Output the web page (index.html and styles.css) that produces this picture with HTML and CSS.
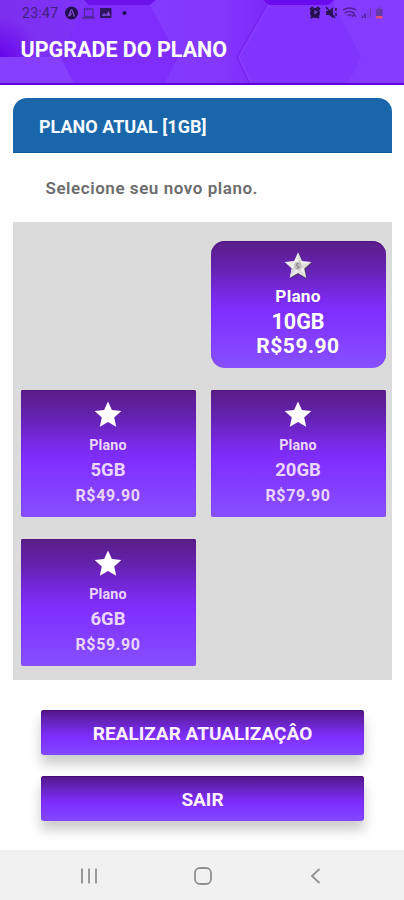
FILE: index.html
```html
<!DOCTYPE html>
<html lang="pt-BR">
<head>
<meta charset="utf-8">
<title>Upgrade do Plano</title>
<link rel="stylesheet" href="styles.css">
</head>
<body>
<header class="header">
  <svg class="header-art" viewBox="0 0 404 85" preserveAspectRatio="none" aria-hidden="true">
    <defs>
      <linearGradient id="left" x1="0" y1="0" x2="1" y2="0"><stop offset="0" stop-color="#7c2fee"/><stop offset="1" stop-color="#7f33f7"/></linearGradient>
      <radialGradient id="low" gradientUnits="userSpaceOnUse" cx="0" cy="57" r="40"><stop offset="0" stop-color="#6200ea" stop-opacity=".9"/><stop offset="1" stop-color="#6600f0" stop-opacity="0"/></radialGradient>
      <linearGradient id="soft" x1="0" y1="0" x2="1" y2="0"><stop offset="0" stop-color="#853bff"/><stop offset=".6" stop-color="#8436fd"/><stop offset="1" stop-color="#7c2af6"/></linearGradient>
    </defs>
    <rect width="404" height="85" fill="#7e2dff"/>
    <path d="M0 0H88L74 28L60 57H0Z" fill="url(#left)"/>
    <path d="M0 0H88L74 28L60 57H0Z" fill="url(#low)"/>
    <path d="M0 57H61L75 85H0Z" fill="#873fff"/>
    <path d="M84 0H160L150 5H89Z" fill="#6c12ea"/>
    <path d="M89 5H150L178 57L164 85H75L60 57Z" fill="#7e2dfd"/>
    <path d="M156 0H269L239 57L252 85H164L178 57L150 5Z" fill="url(#soft)"/>
    <path d="M263 0H334L328 5H269Z" fill="#6a0aee"/>
    <path d="M269 5H334L361 57L347 85H252L239 57Z" fill="#8034fd"/>
    <path d="M269 5L239 57L252 85" fill="none" stroke="#9142ff"/>
    <path d="M267 5L237 57L250 85" fill="none" stroke="#6910e8" stroke-width="1.5" opacity=".3"/>
    <path d="M334 5L361 57L347 85H404V0H334Z" fill="#853cff"/>
    <rect y="83" width="404" height="2" fill="#6400df"/>
  </svg>
  <div class="status">
    <div class="status-left">
      <span class="clock">23:47</span>
      <svg width="65" height="16" viewBox="0 0 65 16">
        <circle cx="6.500" cy="8" r="6.500" fill="#24104e"/>
        <path d="M3.500 11.500L5.800 5.500Q6.500 4.300 7.200 5.500L9.500 11.500M6.500 8L5 11" fill="none" stroke="#8048d0" stroke-width="1.300"/>
        <path d="M19.500 4h8.500v7.500h-8.500zM17 13h13" fill="none" stroke="#53269d" stroke-width="1.300"/>
        <rect x="35" y="3" width="11.500" height="10" rx="1" fill="#2e145e"/>
        <path d="M36.500 10.800L39 8l2 2 2.500-4 2 4.800z" fill="#8650dd"/>
        <circle cx="59.500" cy="8" r="2" fill="#24104e"/>
      </svg>
    </div>
    <svg class="status-right" width="76" height="16" viewBox="0 0 76 16">
      <path d="M1 4.500L4 2M11 4.500L8 2" stroke="#25104d" stroke-width="2"/>
      <circle cx="6" cy="8" r="5" fill="#25104d"/>
      <path d="M2 13l2-2M10 13l-2-2" stroke="#25104d" stroke-width="2"/>
      <path d="M6 5v3.500l2.500-2" fill="none" stroke="#7843ce" stroke-width="1.200"/>
      <path d="M17 6h3l4-4v11l-4-3h-3z" fill="#2b1257"/>
      <path d="M17 2l9 11M27 3v3m0 2v3" stroke="#2b1257" stroke-width="1.500"/>
      <path d="M34 5q6.500-4 13 0M36 8q4.500-3 9 0M38.500 10.500q2-1.500 4 0" fill="none" stroke="#502095" stroke-width="1.600"/>
      <path d="M43 12l2-3 2 3" fill="none" stroke="#502095" stroke-width="1.400"/>
      <path d="M53.500 13V10.500M56 13V8.500" stroke="#4c1f90" stroke-width="1.500"/>
      <path d="M59 13V5M61.500 13V3" stroke="#7038c8" stroke-width="1"/>
      <path d="M67 4h2V2.500h2.500V4h2v7H67z" fill="#663aa9"/>
      <rect x="67" y="11" width="6.500" height="2.500" fill="#e54d7e"/>
    </svg>
  </div>
  <h1 class="title">UPGRADE DO PLANO</h1>
</header>

<main class="content">
  <h2 class="current-plan">PLANO ATUAL [1GB]</h2>
  <p class="hint">Selecione seu novo plano.</p>

  <section class="plans">
    <article class="plan plan-selected">
      <svg class="star" viewBox="0 0 28 28">
        <path d="M14.800 1L18.800 9.500L28 11L21.500 17.800L23 27L14.600 22.500L6 26.500L8 17.500Z" fill="#4b3860"/>
        <path d="M14 .5L17.900 9L27.300 10L20.200 16.500L22.200 25.800L14 21L5.800 25.800L7.800 16.500L.7 10L10.100 9Z" fill="#eeedec"/>
        <path d="M14 .5L17.900 9L14 14ZM27.300 10L20.200 16.500L14 14ZM22.200 25.800L14 21V14ZM5.800 25.800L7.800 16.500L14 14Z" fill="#dedcdb"/>
        <circle cx="14" cy="14" r="4" fill="#c4c2c2"/>
        <path d="M15.500 12Q12.500 11 12.500 12.700T14.500 14.500T12.500 16.500" fill="none" stroke="#969294" stroke-width="1.300"/>
      </svg>
      <span class="label">Plano</span>
      <span class="size">10GB</span>
      <span class="price">R$59.90</span>
    </article>
    <article class="plan plan-left">
      <svg class="star" viewBox="0 0 28 28"><path d="M14 .5L17.900 9L27.300 10L20.200 16.500L22.200 25.800L14 21L5.800 25.800L7.800 16.500L.7 10L10.100 9Z" fill="#fff"/></svg>
      <span class="label">Plano</span>
      <span class="size">5GB</span>
      <span class="price">R$49.90</span>
    </article>
    <article class="plan">
      <svg class="star" viewBox="0 0 28 28"><path d="M14 .5L17.900 9L27.300 10L20.200 16.500L22.200 25.800L14 21L5.800 25.800L7.800 16.500L.7 10L10.100 9Z" fill="#fff"/></svg>
      <span class="label">Plano</span>
      <span class="size">20GB</span>
      <span class="price">R$79.90</span>
    </article>
    <article class="plan plan-left">
      <svg class="star" viewBox="0 0 28 28"><path d="M14 .5L17.900 9L27.300 10L20.200 16.500L22.200 25.800L14 21L5.800 25.800L7.800 16.500L.7 10L10.100 9Z" fill="#fff"/></svg>
      <span class="label">Plano</span>
      <span class="size">6GB</span>
      <span class="price">R$59.90</span>
    </article>
  </section>

  <div class="actions">
    <button class="action">REALIZAR ATUALIZAÇÂO</button>
    <button class="action">SAIR</button>
  </div>
</main>

<nav class="navbar">
  <svg width="18" height="18" viewBox="0 0 18 18"><path d="M2 1.500v15M9 1.500v15M16 1.500v15"/></svg>
  <svg width="20" height="20" viewBox="0 0 20 20"><rect x="2" y="2" width="16" height="16" rx="5"/></svg>
  <svg width="18" height="18" viewBox="0 0 18 18"><path d="M12.500 2L5 9L12.500 16"/></svg>
</nav>
</body>
</html>
```
FILE: styles.css
```css
* {
  box-sizing: border-box;
}

body {
  margin: 0;
  height: 900px;
  display: flex;
  flex-direction: column;
  overflow: hidden;
  background: #fefefe;
  font-family: Roboto, "Liberation Sans", sans-serif;
}

h1, h2, p {
  margin: 0;
}

.header {
  position: relative;
  height: 85px;
  flex: none;
  background: #7e2dff;
}

.header-art {
  position: absolute;
  inset: 0;
  width: 100%;
  height: 100%;
}

.status {
  position: relative;
  display: flex;
  justify-content: space-between;
  height: 28px;
  padding: 5px 19px 0 22px;
}

.status-left {
  display: flex;
  gap: 6px;
}

.clock {
  width: 37px;
  font-size: 14px;
  line-height: 17px;
  letter-spacing: 0.3px;
  color: #432080;
}

.title {
  position: relative;
  padding: 8px 0 0 20.5px;
  font-size: 21.5px;
  line-height: 28px;
  font-weight: 700;
  color: #fff;
}

.content {
  flex: 1;
  padding: 13px 12px 0 13px;
}

.current-plan {
  height: 55px;
  padding-left: 26px;
  border-radius: 14px 14px 0 0;
  border-bottom: 1px solid #105796;
  background: #1967aa;
  color: #f5faff;
  font-size: 18px;
  line-height: 58px;
  font-weight: 700;
}

.hint {
  height: 69px;
  padding-left: 32.5px;
  color: #6c6c6c;
  font-size: 17px;
  line-height: 70px;
  font-weight: 600;
  letter-spacing: 0.55px;
}

.plans {
  display: grid;
  grid-template-columns: 175px 175px;
  grid-auto-rows: 127px;
  gap: 22px 15px;
  height: 458px;
  padding: 19px 7px 0 8px;
  background: #dbdbdb;
}

.plan {
  grid-column: 2;
  display: flex;
  flex-direction: column;
  align-items: center;
  padding: 11px 1px 0 0;
  border-radius: 2px;
  background: linear-gradient(#5b1d88 0%, #6422ae 20%, #7829e4 42%, #802eff 55%, #8650ff 100%);
  box-shadow: inset 0 1px 1px #50147e;
  color: #ead5ff;
  font-weight: 700;
}

.plan-left {
  grid-column: 1;
}

.star {
  width: 28px;
  height: 28px;
  flex: none;
}

.label {
  height: 25px;
  font-size: 14.3px;
  line-height: 33px;
  letter-spacing: 0.2px;
}

.size {
  height: 25px;
  font-size: 18.5px;
  line-height: 33px;
}

.price {
  height: 25px;
  font-size: 16px;
  line-height: 33px;
  letter-spacing: 0.6px;
}

.plan-selected {
  border-radius: 14px;
  color: #fff;
}

.plan-selected .label {
  font-size: 17.3px;
}

.plan-selected .size {
  font-size: 21.5px;
}

.plan-selected .price {
  font-size: 21px;
  letter-spacing: 0.5px;
}

.actions {
  display: flex;
  flex-direction: column;
  gap: 21px;
  padding: 30px 28px 0 28px;
}

.action {
  height: 45px;
  padding: 1px 0 0;
  border: 0;
  border-radius: 3px;
  background: linear-gradient(#551586 0%, #6422b5 22%, #7e2eff 60%, #8248ff 100%);
  box-shadow: inset 0 1px 1px #470c78, 0 9px 12px rgba(0, 0, 0, 0.2);
  color: #fff0ff;
  font: 700 19px Roboto, "Liberation Sans", sans-serif;
}

.navbar {
  height: 50px;
  flex: none;
  display: flex;
  justify-content: space-between;
  align-items: center;
  padding: 1px 79px 0 80px;
  background: #f1f1f1;
  fill: none;
  stroke: #909090;
  stroke-width: 1.8;
}
```
